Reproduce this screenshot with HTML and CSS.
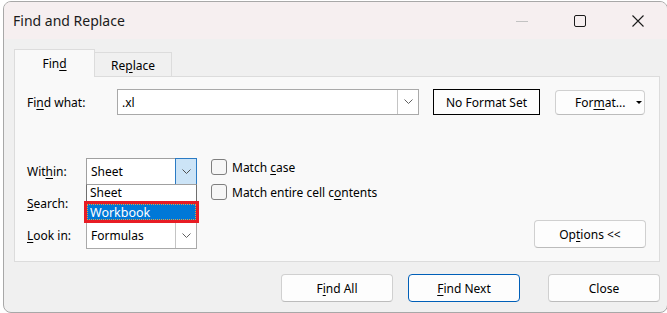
FILE: index.html
```html
<!DOCTYPE html>
<html>
<head>
  <title>Find and Replace</title>
  <meta charset="utf-8" />
  <link rel="stylesheet" href="styles.css">
</head>
<body>

  <div class="window">
    <div class="titlebar">
      <span class="title">Find and Replace</span>
      <div class="controls">
        <span class="ctl">
          <svg width="14" height="14" viewBox="0 0 14 14"><path d="M1 7.5h12" stroke="#c2c2c2" stroke-width="1"/></svg>
        </span>
        <span class="ctl">
          <svg width="14" height="14" viewBox="0 0 14 14"><rect x="1.5" y="1.5" width="11" height="11" rx="1.5" fill="none" stroke="#1b1b1b" stroke-width="1"/></svg>
        </span>
        <span class="ctl">
          <svg width="14" height="14" viewBox="0 0 14 14"><path d="M1.5 1.5l11 11M12.5 1.5l-11 11" stroke="#1b1b1b" stroke-width="1.1"/></svg>
        </span>
      </div>
    </div>

    <div class="content">
      <div class="tabs">
        <div class="tab active"><span>Fin<u>d</u></span></div>
        <div class="tab"><span>Re<u>p</u>lace</span></div>
      </div>

      <div class="panel">
        <div class="row-top">
          <label class="lbl lbl-what">Fi<u>n</u>d what:</label>
          <div class="combo combo-what">
            <span class="val">.xl</span>
            <span class="drop">
              <svg width="9" height="6" viewBox="0 0 9 6"><path d="M0.5 0.5l4 4 4-4" fill="none" stroke="#606060"/></svg>
            </span>
          </div>
          <div class="fmt-set">No Format Set</div>
          <button class="btn btn-fmt"><span>For<u>m</u>at...</span><span class="caret"></span></button>
        </div>

        <div class="lower">
          <div class="fields">
            <div class="field">
              <label class="lbl lbl-short">Wit<u>h</u>in:</label>
              <div class="combo combo-small hot">
                <span class="val">Sheet</span>
                <span class="drop">
                  <svg width="9" height="6" viewBox="0 0 9 6"><path d="M0.5 0.5l4 4 4-4" fill="none" stroke="#505050"/></svg>
                </span>
                <div class="list">
                  <div class="item">Sheet</div>
                  <div class="item sel"><span>Workbook</span></div>
                </div>
              </div>
            </div>
            <div class="field">
              <label class="lbl lbl-short"><u>S</u>earch:</label>
              <div class="combo combo-small">
                <span class="val"></span>
                <span class="drop"></span>
              </div>
            </div>
            <div class="field">
              <label class="lbl lbl-short"><u>L</u>ook in:</label>
              <div class="combo combo-small">
                <span class="val">Formulas</span>
                <span class="drop">
                  <svg width="9" height="6" viewBox="0 0 9 6"><path d="M0.5 0.5l4 4 4-4" fill="none" stroke="#606060"/></svg>
                </span>
              </div>
            </div>
          </div>

          <div class="checks">
            <div class="check"><span class="box"></span><span>Match <u>c</u>ase</span></div>
            <div class="check"><span class="box"></span><span>Match entire cell c<u>o</u>ntents</span></div>
          </div>

          <button class="btn btn-options">Op<u>t</u>ions &lt;&lt;</button>
        </div>
      </div>

      <div class="footer">
        <button class="btn btn-foot">F<u>i</u>nd All</button>
        <button class="btn btn-foot default"><u>F</u>ind Next</button>
        <button class="btn btn-foot close">Close</button>
      </div>
    </div>
  </div>

</body>
</html>
```

FILE: styles.css
```css
html, body {
  margin: 0;
  height: 100%;
  overflow: hidden;
}

body {
  background: #ffffff;
  font-family: "Noto Sans", "Liberation Sans", sans-serif;
  font-size: 12px;
  color: #000;
}

u {
  text-underline-offset: 2px;
}

.window {
  box-sizing: border-box;
  margin: 1px 0 0 3px;
  width: 665px;
  height: 312px;
  border: 1px solid #a8a8a8;
  border-radius: 8px;
  background: #f0f0f0;
  overflow: hidden;
}

/* title bar */
.titlebar {
  height: 37px;
  background: #f6eff0;
  display: flex;
  align-items: center;
  justify-content: space-between;
}

.title {
  padding-left: 9px;
  font-size: 14px;
  color: #1b1b1b;
}

.controls {
  display: flex;
  height: 100%;
}

.ctl {
  width: 58px;
  display: flex;
  align-items: center;
  justify-content: center;
}

/* tabs + panel */
.content {
  padding: 10px 7px 0 10px;
}

.tabs {
  display: flex;
  align-items: flex-end;
  height: 28px;
  margin-bottom: -1px;
  position: relative;
  z-index: 1;
}

.tab {
  box-sizing: border-box;
  height: 25px;
  width: 77px;
  border: 1px solid #dcdcdc;
  border-left: none;
  background: #f0f0f0;
  display: flex;
  align-items: center;
  justify-content: center;
  padding-top: 1px;
}

.tab.active {
  height: 28px;
  width: 81px;
  border-left: 1px solid #dcdcdc;
  border-bottom: none;
  background: #f9f9f9;
  padding-bottom: 2px;
}

.panel {
  box-sizing: border-box;
  height: 186px;
  border: 1px solid #dcdcdc;
  background: #f9f9f9;
  padding: 12px 13px 12px 12px;
  display: flex;
  flex-direction: column;
}

.row-top {
  display: flex;
  align-items: center;
}

.lbl {
  color: #000;
}

.lbl-what {
  width: 90px;
}

.lbl-short {
  width: 59px;
}

/* combos */
.combo {
  box-sizing: border-box;
  height: 26px;
  border: 1px solid #a9a9a9;
  background: #fff;
  display: flex;
  align-items: center;
  position: relative;
}

.combo .val {
  flex: 1;
  padding-left: 4px;
}

.combo .drop {
  box-sizing: border-box;
  width: 21px;
  height: 100%;
  border-left: 1px solid #c4c4c4;
  display: flex;
  align-items: center;
  justify-content: center;
}

.combo-what {
  width: 302px;
}

.combo-small {
  width: 111px;
  height: 27px;
}

.combo.hot {
  border-color: #a0a0a0;
}

.combo.hot .drop {
  background: #cce4f7;
  border: 1px solid #2b7bc4;
  height: calc(100% + 2px);
  margin: -1px -1px -1px 0;
  width: 22px;
}

.list {
  position: absolute;
  top: 25px;
  left: -1px;
  width: 111px;
  box-sizing: border-box;
  border: 1px solid #6f6f6f;
  border-top-color: #a0a0a0;
  background: #fff;
  z-index: 2;
}

.item {
  height: 16px;
  line-height: 15px;
  padding-left: 3px;
}

.item.sel {
  height: 22px;
  line-height: 15px;
  margin: 0 -3px -2px -3px;
  border: 3px solid #e81c24;
  padding: 0;
  background: #0078d7;
  box-sizing: border-box;
}

.item.sel span {
  display: block;
  height: 100%;
  box-sizing: border-box;
  border: 1px dotted #d9a04a;
  padding-left: 2px;
  color: #fff;
  font-size: 12.5px;
}

.fmt-set {
  box-sizing: border-box;
  margin-left: 14px;
  width: 107px;
  height: 26px;
  border: 1px solid #000;
  background: #fdfdfd;
  display: flex;
  align-items: center;
  justify-content: center;
}

/* buttons */
.btn {
  box-sizing: border-box;
  font-family: inherit;
  font-size: 12px;
  color: #000;
  background: #fdfdfd;
  border: 1px solid #d0d0d0;
  border-bottom-color: #bcbcbc;
  border-radius: 4px;
  padding: 0;
}

.btn-fmt {
  margin-left: 15px;
  width: 90px;
  height: 25px;
  display: flex;
  align-items: center;
  justify-content: flex-start;
  padding-left: 19px;
  gap: 11px;
}

.caret {
  width: 0;
  height: 0;
  border-left: 3px solid transparent;
  border-right: 3px solid transparent;
  border-top: 3px solid #000;
}

/* lower area */
.lower {
  margin-top: 43px;
  display: flex;
  align-items: flex-end;
  flex: 1;
}

.fields {
  display: flex;
  flex-direction: column;
  gap: 5px;
}

.field {
  display: flex;
  align-items: center;
}

.checks {
  align-self: flex-start;
  margin-left: 14px;
  display: flex;
  flex-direction: column;
  gap: 9px;
  padding-top: 1px;
}

.check {
  display: flex;
  align-items: center;
  gap: 5px;
  height: 16px;
}

.box {
  box-sizing: border-box;
  width: 16px;
  height: 16px;
  border: 1px solid #7f7f7f;
  border-radius: 3px;
  background: #f6f6f6;
}

.btn-options {
  margin-left: auto;
  width: 112px;
  height: 28px;
  margin-bottom: 1px;
}

/* footer */
.footer {
  display: flex;
  justify-content: flex-end;
  gap: 15px;
  margin-top: 12px;
}

.btn-foot {
  width: 112px;
  height: 28px;
}

.btn-foot.default {
  border: 1px solid #005fb8;
}

.btn-foot.close {
  margin-left: 13px;
}
```
